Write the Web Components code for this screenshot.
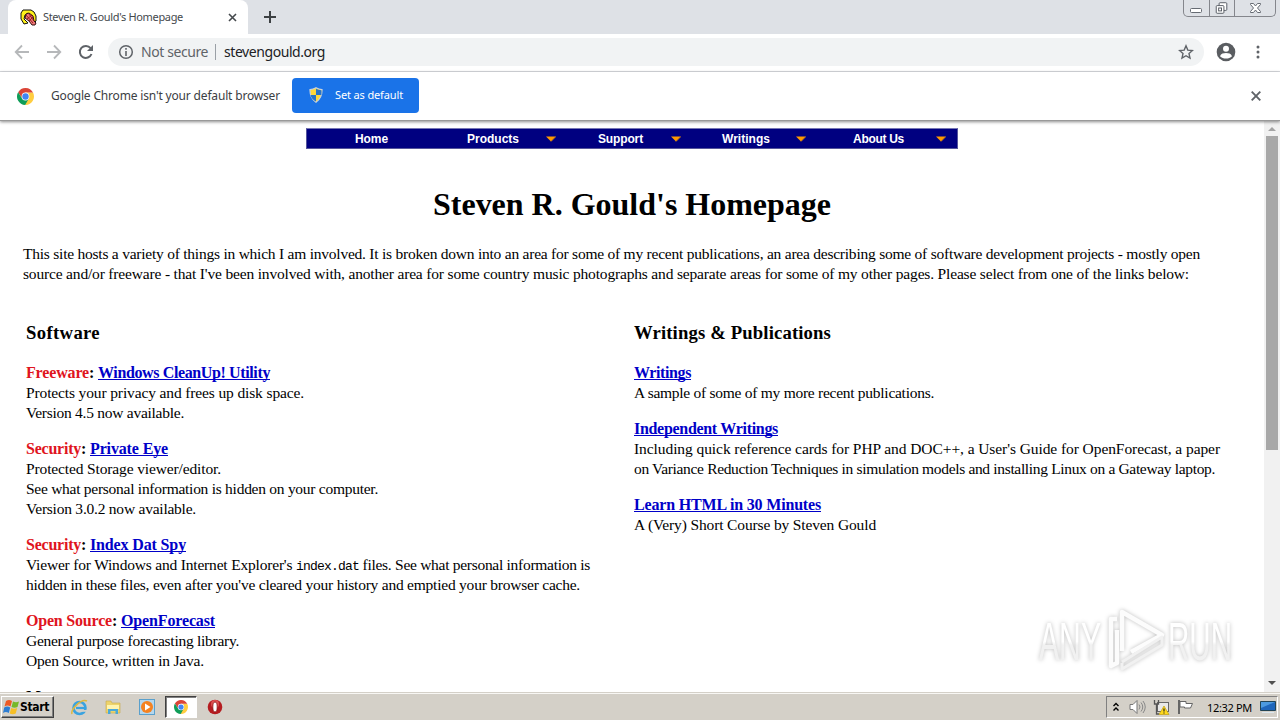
<!DOCTYPE html>
<html lang="en">
<head>
<meta charset="utf-8">
<title>Steven R. Gould's Homepage</title>
<style>
html,body{margin:0;height:100%;overflow:hidden;background:#fff}
</style>
</head>
<body>
<desktop-screen></desktop-screen>
<script>
const define = (name, html, ready) => {
  const template = document.createElement('template');
  template.innerHTML = html;
  customElements.define(name, class extends HTMLElement {
    connectedCallback() {
      if (this.shadowRoot) return;
      this.attachShadow({mode: 'open'}).append(template.content.cloneNode(true));
      if (ready) ready(this);
    }
  });
};

/* Text run tracked so that it spans the given width in pixels. */
define('text-run', `<style>:host{display:inline-block;white-space:pre;vertical-align:baseline}span{display:inline-block;text-decoration:var(--line,none);text-decoration-skip-ink:none;text-decoration-thickness:1px}</style><span><slot></slot></span>`, el => {
  const w = +el.getAttribute('w');
  const span = el.shadowRoot.querySelector('span');
  const natural = span.getBoundingClientRect().width;
  const n = el.textContent.length;
  if (w && natural) {
    span.style.letterSpacing = ((w - natural) / n) + 'px';
    el.style.width = w + 'px';
  }
});

define('chrome-logo', `<style>:host{display:block;width:17px;height:17px;flex:none}svg{display:block;width:100%;height:100%}</style>
<svg viewBox="0 0 48 48"><path fill="#ffcd40" d="M24 24V13H45.300A24 24 0 0 1 23 48z"/><path fill="#db4437" d="M24 13H45.300A24 24 0 0 0 3.200 12L14 29z"/><path fill="#0f9d58" d="M33.500 29.500 23 48A24 24 0 0 1 3.200 12L14 29z"/><circle cx="24" cy="24" r="11" fill="#fff"/><circle cx="24" cy="24" r="9" fill="#4285f4"/></svg>`);

define('tab-strip', `<style>
:host{display:flex;height:34px;background:#dee1e6;font:11px "Noto Sans",sans-serif;color:#45494d}
.tab{width:240px;margin-left:8px;background:#fff;border-radius:8px 8px 0 0;display:flex;align-items:center;box-sizing:border-box;padding-left:12px}
.fav{width:17px;height:17px;margin-right:6px}
text-run{margin-top:-1px}
.tab .x{margin-left:45px;width:9px;height:9px}
.plus{width:12px;height:12px;margin:11px 0 0 16px}
.win{margin-left:auto;margin-right:4px;width:91px;height:16px;border:1px solid #84868c;border-top:0;border-radius:0 0 5px 5px;display:grid;grid-template-columns:25px 25px 1fr}
.win svg{display:block;width:100%;height:16px}.win svg+svg{border-left:1px solid #84868c;box-sizing:border-box}
</style>
<div class="tab"><svg class="fav" viewBox="0 0 17 17"><path d="M3 1h8l3 2 2 4v5l-2 2-2-6-4-4-3 2-1 4 4 4-4 1-3-5V4z" fill="#fff21a" stroke="#111"/><path d="M6 5l3-1 4 3 1 5 2 2-1 2h-3l-3-4-4-3z" fill="#ee7777" stroke="#311" stroke-width="1"/><path d="M6 6l7 8M9 5l5 7M7 10l5-4M9 12l4-4" stroke="#811" stroke-width=".8"/></svg><text-run w="140">Steven R. Gould's Homepage</text-run><svg class="x" viewBox="0 0 9 9"><path d="M1 1l7 7M8 1 1 8" stroke="#45494d" stroke-width="1.6"/></svg></div>
<svg class="plus" viewBox="0 0 12 12"><path d="M6 0v12M0 6h12" stroke="#3c4043" stroke-width="2"/></svg>
<div class="win"><svg viewBox="0 0 25 16"><rect x="6.500" y="8.500" width="11" height="4" rx="1" fill="#fff" stroke="#666b73"/></svg><svg viewBox="0 0 25 16"><rect x="9.500" y="2.500" width="8" height="8" rx="1" fill="#fff" stroke="#555a62"/><rect x="6.500" y="5.500" width="8" height="8" rx="1" fill="#fff" stroke="#555a62"/><rect x="9" y="8" width="3" height="3" fill="#fff" stroke="#555a62"/></svg><svg viewBox="0 0 40 16"><path d="M15.500 3.500h3l2 2.500 2-2.500h3v1l-3 3.500 3 3.500v1h-3l-2-2.500-2 2.500h-3v-1l3-3.500-3-3.500z" fill="#fff" stroke="#666b73"/></svg></div>`);

define('address-bar', `<style>
:host{display:flex;align-items:center;height:37px;box-sizing:content-box;background:#fff;border-bottom:1px solid #dadce0;font:14px "Noto Sans",sans-serif;color:#202124}
.row{display:flex;align-items:center;height:35px;width:100%;margin-bottom:2px}
svg{display:block;flex:none}
.pill{display:flex;align-items:center;box-sizing:border-box;width:1096px;height:28px;border-radius:14px;background:#f1f3f4;margin-left:14px;padding:0 10px 0 10px}
.ns{color:#5f6368}.sep{width:1px;height:16px;background:#9aa0a6;margin:0 8px}
.star{margin-left:auto}
</style>
<div class="row"><svg style="margin-left:14px" width="16" height="16" viewBox="0 0 16 16"><path d="M15 8H2M8 1.500 1.700 8 8 14.500" fill="none" stroke="#b6b8ba" stroke-width="1.800"/></svg>
<svg style="margin-left:16px" width="16" height="16" viewBox="0 0 16 16"><path d="M1 8h13M8 1.500 14.300 8 8 14.500" fill="none" stroke="#b6b8ba" stroke-width="1.800"/></svg>
<svg style="margin-left:16px" width="16" height="16" viewBox="0 0 16 16"><path d="M13.500 10A6 6 0 1 1 12.600 4.200" fill="none" stroke="#5f6368" stroke-width="2"/><path d="M15 1v6H9z" fill="#5f6368"/></svg>
<div class="pill"><svg width="16" height="16" viewBox="0 0 16 16"><circle cx="8" cy="8" r="6.300" fill="none" stroke="#5f6368" stroke-width="1.500"/><path d="M8 7v5M8 4v1.800" stroke="#5f6368" stroke-width="1.600"/></svg>
<text-run class="ns" style="margin-left:7px" w="67">Not secure</text-run><span class="sep" style="margin-left:7px"></span><text-run w="101">stevengould.org</text-run>
<svg class="star" width="16" height="16" viewBox="0 0 16 16"><path d="M8 1.800 9.800 6.100 14.500 6.500 11 9.600 12 14 8 11.700 4 14 5 9.600 1.500 6.500 6.200 6.100z" fill="none" stroke="#5f6368" stroke-width="1.400"/></svg></div>
<svg style="margin-left:12px" width="20" height="20" viewBox="0 0 20 20"><circle cx="10" cy="10" r="9.300" fill="#5a5d61"/><circle cx="10" cy="6.800" r="3" fill="#fff"/><path d="M4 14.200c1-2.600 3.500-3.200 6-3.200s5 .6 6 3.200c-3 3.200-9 3.200-12 0z" fill="#fff"/></svg>
<svg style="margin-left:20px" width="4" height="16" viewBox="0 0 4 16"><g fill="#5f6368"><circle cx="2" cy="3" r="1.500"/><circle cx="2" cy="8" r="1.500"/><circle cx="2" cy="13" r="1.500"/></g></svg></div>`);

define('info-bar', `<style>
:host{display:flex;align-items:center;height:48px;background:#fff;border-bottom:1px solid #999;font:12px "Noto Sans",sans-serif;color:#3c4043;position:relative;z-index:1;box-shadow:0 1px 3px rgba(0,0,0,.45)}
chrome-logo{margin:0 17px 0 17px}
.btn{display:flex;align-items:center;width:127px;height:35px;border-radius:4px;background:#1a73e8;color:#fff;font-size:11px;margin:0 0 2px 13px;box-sizing:border-box;padding-left:16px}
text-run{margin-top:-2px}
.x{margin-left:auto;margin-right:19px}
</style>
<chrome-logo></chrome-logo><text-run w="229">Google Chrome isn't your default browser</text-run>
<div class="btn" style="margin-left:12px"><svg width="16" height="16" viewBox="0 0 16 16" style="margin-right:11px"><path d="M8 .8Q11 2.500 14 2.600 14.300 11 8 15.300 1.700 11 2 2.600 5 2.500 8 .8z" fill="#ffd83a" stroke="#c8d2dc" stroke-width="1.200"/><path d="M8 8H2.500Q3.500 12 8 14.500zM8 1.800V8h5.400Q13.600 5 13.400 3.200 10.500 3 8 1.800z" fill="#2874c8"/></svg><text-run w="68">Set as default</text-run></div>
<svg class="x" width="10" height="10" viewBox="0 0 10 10"><path d="M.7.7l8.600 8.600M9.300.7.7 9.300" stroke="#5f6368" stroke-width="1.900"/></svg>`);

define('nav-item', `<style>
:host{display:flex;align-items:center}
svg{display:none;margin-left:auto;margin-right:9px}
:host([menu]) svg{display:block}
</style><slot></slot><svg width="10" height="6" viewBox="0 0 10 6"><path d="M0 .5h10L5 5.500z" fill="#f90"/><path d="M5 5.500 10 .5" stroke="#a86a20" stroke-width=".8"/></svg>`);

define('site-nav', `<style>
:host{display:grid;grid-template-columns:129px 129px 125px 125px 140px;width:650px;height:19px;border:1px solid #55559c;border-top-color:#7777b4;background:#000080;color:#fff;font:bold 12px "Liberation Sans",sans-serif}
nav-item:nth-of-type(1){padding-left:48px}nav-item:nth-of-type(2){padding-left:31px}
nav-item:nth-of-type(3){padding-left:33px}nav-item:nth-of-type(4){padding-left:32px}nav-item:nth-of-type(5){padding-left:38px}
</style>
<nav-item><text-run w="33">Home</text-run></nav-item><nav-item menu><text-run w="52">Products</text-run></nav-item><nav-item menu><text-run w="45">Support</text-run></nav-item><nav-item menu><text-run w="48">Writings</text-run></nav-item><nav-item menu><text-run w="51">About Us</text-run></nav-item>`);

define('link-entry', `<style>
:host{display:block;margin-bottom:16px;line-height:20px;white-space:nowrap}
.head{font-weight:bold;height:20px;font-size:16px}
::slotted(div){height:20px}
</style><div class="head"><slot name="head"></slot></div><slot></slot>`);

define('home-page', `<style>
:host{display:block;flex:1;height:100%;overflow:hidden;background:#fff;color:#000;font:15.500px/20px "Liberation Serif",serif}
site-nav{margin:7px auto 0 306px}
h1{font-size:32px;line-height:36px;margin:37px 0 0 433px;height:36px;white-space:nowrap}
.intro{margin:22px 0 0 23px;white-space:nowrap}.intro div{height:20px}
.cols{display:grid;grid-template-columns:608px 1fr;margin:38px 0 0 26px}
h3{font-size:18.700px;line-height:22px;margin:0 0 19px;height:22px;white-space:nowrap}
b{color:#df1420}a{color:#0000c8;--line:underline}
code{font:13px/16px "Liberation Mono",monospace}
</style>
<site-nav></site-nav>
<h1><text-run w="398">Steven R. Gould's Homepage</text-run></h1>
<div class="intro"><div><text-run w="1177">This site hosts a variety of things in which I am involved. It is broken down into an area for some of my recent publications, an area describing some of software development projects - mostly open</text-run></div><div><text-run w="1166">source and/or freeware - that I've been involved with, another area for some country music photographs and separate areas for some of my other pages. Please select from one of the links below:</text-run></div></div>
<div class="cols"><section>
<h3><text-run w="74">Software</text-run></h3>
<link-entry><span slot="head"><b><text-run w="63">Freeware</text-run></b><text-run w="9">: </text-run><a><text-run w="172">Windows CleanUp! Utility</text-run></a></span><div><text-run w="278">Protects your privacy and frees up disk space.</text-run></div><div><text-run w="158">Version 4.5 now available.</text-run></div></link-entry>
<link-entry><span slot="head"><b><text-run w="55">Security</text-run></b><text-run w="9">: </text-run><a><text-run w="78">Private Eye</text-run></a></span><div><text-run w="195">Protected Storage viewer/editor.</text-run></div><div><text-run w="352">See what personal information is hidden on your computer.</text-run></div><div><text-run w="170">Version 3.0.2 now available.</text-run></div></link-entry>
<link-entry><span slot="head"><b><text-run w="55">Security</text-run></b><text-run w="9">: </text-run><a><text-run w="96">Index Dat Spy</text-run></a></span><div><text-run w="270">Viewer for Windows and Internet Explorer's </text-run><code><text-run w="63">index.dat</text-run></code><text-run w="231"> files. See what personal information is</text-run></div><div><text-run w="554">hidden in these files, even after you've cleared your history and emptied your browser cache.</text-run></div></link-entry>
<link-entry><span slot="head"><b><text-run w="86">Open Source</text-run></b><text-run w="9">: </text-run><a><text-run w="94">OpenForecast</text-run></a></span><div><text-run w="213">General purpose forecasting library.</text-run></div><div><text-run w="178">Open Source, written in Java.</text-run></div></link-entry>
<link-entry><span slot="head">M</span></link-entry>
</section><section>
<h3><text-run w="197">Writings &amp; Publications</text-run></h3>
<link-entry><a slot="head"><text-run w="57">Writings</text-run></a><div><text-run w="300">A sample of some of my more recent publications.</text-run></div></link-entry>
<link-entry><a slot="head"><text-run w="144">Independent Writings</text-run></a><div><text-run w="586">Including quick reference cards for PHP and DOC++, a User's Guide for OpenForecast, a paper</text-run></div><div><text-run w="581">on Variance Reduction Techniques in simulation models and installing Linux on a Gateway laptop.</text-run></div></link-entry>
<link-entry><a slot="head"><text-run w="187">Learn HTML in 30 Minutes</text-run></a><div><text-run w="242">A (Very) Short Course by Steven Gould</text-run></div></link-entry>
</section></div>`);

define('scroll-bar', `<style>
:host{display:flex;flex-direction:column;align-items:center;width:16px;background:#f1f1f1}
.thumb{width:12px;height:314px;background:#a8a8a8;margin-top:5px}
svg{display:block}.down{margin-top:auto;margin-bottom:7px}
</style><svg style="margin-top:6px" width="8" height="4" viewBox="0 0 8 4"><path d="M4 0l4 4H0z" fill="#a3a3a3"/></svg><div class="thumb"></div><svg class="down" width="8" height="4" viewBox="0 0 8 4"><path d="M0 0h8L4 4z" fill="#505050"/></svg>`);

define('water-mark', `<style>
:host{position:absolute;left:1030px;top:602px;pointer-events:none}svg{display:block;overflow:visible;filter:drop-shadow(0 0 2px rgba(0,0,0,.26))}
text{font:53px "Liberation Sans",sans-serif}
</style><svg width="212" height="76" viewBox="0 0 212 76"><defs><linearGradient id="g" x1="0" y1="0" x2="0" y2="1"><stop offset=".5" stop-color="#fff"/><stop offset=".56" stop-color="#f1f1f1"/></linearGradient></defs>
<g fill="url(#g)"><text x="9" y="58" textLength="62" lengthAdjust="spacingAndGlyphs">ANY</text><text x="138" y="58" textLength="64" lengthAdjust="spacingAndGlyphs">RUN</text></g>
<g fill="none" stroke-width="4.500" stroke-linejoin="round" stroke="#fcfcfc"><path d="M92 49V10l40 23-31 17"/><path d="M87 17h-6v47l6-3V28"/><path d="M92 61v6l40-24v-8L92 60" stroke="#f1f1f1" stroke-width="3"/></g></svg>`);

define('task-bar', `<style>
:host{display:flex;align-items:center;height:26px;background:#d4d0c8;border-top:1px solid #f8f7f4;box-shadow:0 -1px #d4d0c8;position:relative;font:11px "Noto Sans",sans-serif;color:#000}
.start{display:flex;align-items:center;width:53px;height:22px;margin-left:1px;box-sizing:border-box;border:1px solid;border-color:#fff #404040 #404040 #fff;box-shadow:inset -1px -1px #808080;font:bold 12px "DejaVu Sans Condensed","DejaVu Sans",sans-serif;padding-left:1px}
svg{display:block;flex:none}
.active{display:flex;align-items:center;justify-content:center;box-sizing:border-box;width:32px;height:22px;background:#fff;border:1px solid;border-color:#404040 #fff #fff #404040;box-shadow:inset 1px 1px #808080;margin:0 10px 0 9px}
.active chrome-logo{width:14px;height:14px}
.tray{display:flex;align-items:center;margin-left:auto;margin-right:2px;width:172px;height:22px;box-sizing:border-box;border:1px solid;border-color:#808080 #fff #fff #808080;padding-left:6px}
</style>
<div class="start"><svg width="17" height="16" viewBox="0 0 17 16"><path d="M3 2q3-2 6 0L7.500 7.500q-3-2-6 0z" fill="#ee5a24"/><path d="M10 2.500q3 1.500 6 0L14.500 8q-3 1.500-6 0z" fill="#76b82a"/><path d="M1.200 8.500q3-2 6 0L5.800 14q-3-2-5.800 0z" fill="#2d7dd2"/><path d="M8.200 9q3 1.500 6 0l-1.500 5.500q-3 1.500-6 0z" fill="#f6bf26"/></svg><text-run w="29">Start</text-run></div>
<svg style="margin-left:17px" width="17" height="17" viewBox="0 0 17 17"><circle cx="8.500" cy="9" r="6" fill="none" stroke="#3aa3e0" stroke-width="2.600"/><path d="M5 9h10" stroke="#3aa3e0" stroke-width="2.200"/><path d="M11 11h5v1.800h-5z" fill="#d4d0c8"/><path d="M1 15C-.5 11 10-1 16 2" fill="none" stroke="#ddb840" stroke-width="1.500"/></svg>
<svg style="margin-left:17px" width="16" height="16" viewBox="0 0 16 16"><path d="M1 2h5l1 2h8v10H1z" fill="#edd36b" stroke="#c6a84b" stroke-width=".6"/><path d="M2 6h12v4H2z" fill="#fff4ae"/><path d="M3 15v-5h10v5h-2.500v-3h-5v3z" fill="#4aa9d8"/></svg>
<svg style="margin-left:18px" width="17" height="17" viewBox="0 0 17 17"><rect x=".5" y=".5" width="15" height="15" fill="#b5d7ed" stroke="#5aa0cc"/><circle cx="8" cy="8" r="6" fill="#f58220"/><path d="M6 4.500v7L11.500 8z" fill="#fff"/></svg>
<div class="active"><chrome-logo></chrome-logo></div>
<svg width="16" height="16" viewBox="0 0 16 16"><circle cx="8" cy="8" r="7.300" fill="#b51c20"/><circle cx="8" cy="5" r="4" fill="#dc5050"/><ellipse cx="8" cy="8" rx="2.200" ry="5" fill="#fff" stroke="#811" stroke-width=".8"/></svg>
<div class="tray"><svg width="6" height="10" viewBox="0 0 6 10"><path d="M.5 4 3 1.500 5.500 4M.5 8.500 3 6l2.500 2.500" fill="none" stroke="#000" stroke-width="1.400"/></svg>
<svg style="margin-left:10px" width="17" height="16" viewBox="0 0 17 16"><path d="M1 5.500h3l4-4v13l-4-4H1z" fill="#fff" stroke="#777"/><path d="M10 5.500q2 2.500 0 5M12 3.500q3.500 4.500 0 9M14 2q4.500 6 0 12" fill="none" stroke="#888"/></svg>
<svg style="margin-left:7px" width="17" height="16" viewBox="0 0 17 16"><rect x="4.500" y="3.500" width="11" height="9" fill="#e8e8e8" stroke="#666"/><path d="M1.500 1v4h4V1M3.500 5v10H6" fill="none" stroke="#555" stroke-width="1.300"/><path d="M11 7l5 8.500H6z" fill="#ffd91c" stroke="#b89500" stroke-width=".6"/><path d="M11 9.500v3M11 13.400v1" stroke="#222" stroke-width="1.200"/></svg>
<svg style="margin-left:7px" width="17" height="16" viewBox="0 0 17 16"><path d="M2 1v14" stroke="#666" stroke-width="2"/><path d="M3 2.500h6v2h6.500L13.500 9h-6V8H3z" fill="#fff" stroke="#666"/></svg>
<text-run style="margin-left:13px" w="45">12:32 PM</text-run>
<svg style="margin-left:8px" width="16" height="14" viewBox="0 0 16 14"><path d="M.5 1.500h15v9H.5z" fill="#1f66bb" stroke="#245"/><path d="M1 2h14L1 8z" fill="#4c9ae0"/><path d="M2 12.500h12" stroke="#dce7ef"/></svg></div>`);

define('desktop-screen', `<style>
:host{display:flex;flex-direction:column;width:1280px;height:720px;overflow:hidden;position:relative}
.view{display:flex;height:571px;flex:none;overflow:hidden}
tab-strip,address-bar,info-bar,task-bar{flex:none}
task-bar{margin-top:auto}
</style><tab-strip></tab-strip><address-bar></address-bar><info-bar></info-bar><div class="view"><home-page></home-page><scroll-bar></scroll-bar></div><water-mark></water-mark><task-bar></task-bar>`);
</script>
</body>
</html>
